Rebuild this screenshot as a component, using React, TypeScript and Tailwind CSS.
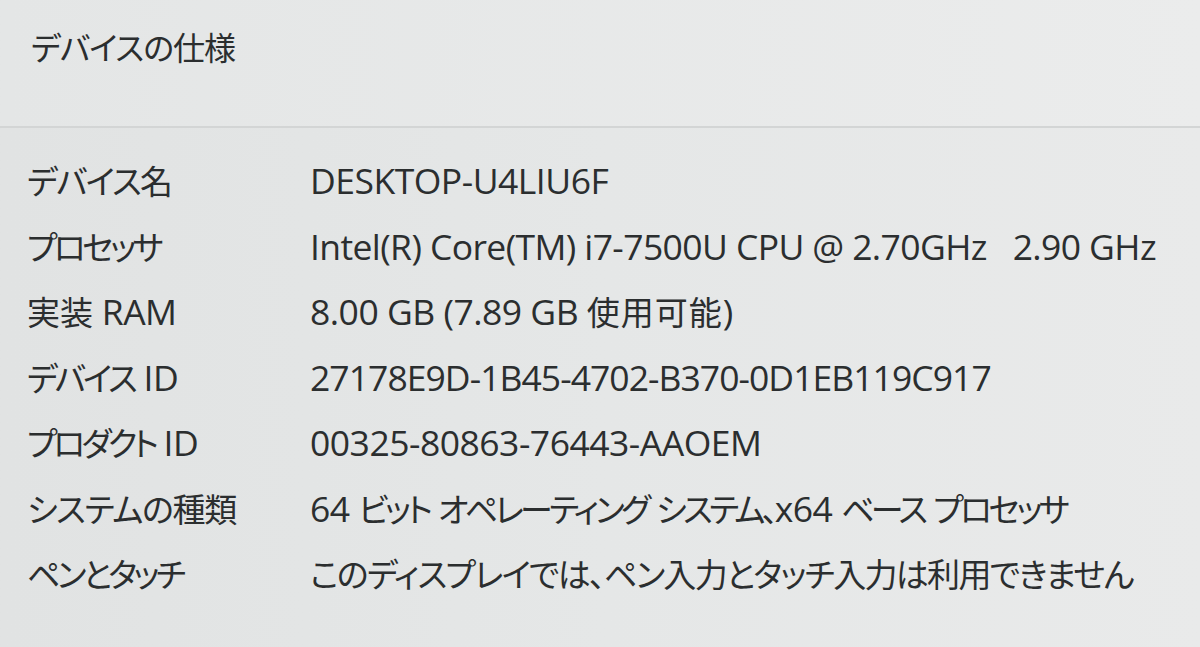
import React from "react";

type Row = { k: string; v: string; kc: string; vc: string; vl?: string };

const rows: Row[] = [
  { k: "デバイス名", v: "DESKTOP-U4LIU6F", kc: "tracking-[-1.7px]", vc: "tracking-[-1.3px]" },
  {
    k: "プロセッサ",
    v: "Intel(R) Core(TM) i7-7500U CPU @ 2.70GHz\u00a0\u00a0 2.90 GHz",
    kc: "tracking-[-3.6px]",
    vc: "tracking-[-1.3px]",
    vl: "tracking-[-0.6px]",
  },
  { k: "実装 RAM", v: "8.00 GB (7.89 GB 使用可能)", kc: "tracking-[0px]", vc: "tracking-[1px]" },
  {
    k: "デバイス ID",
    v: "27178E9D-1B45-4702-B370-0D1EB119C917",
    kc: "tracking-[-3px]",
    vc: "tracking-[-1.3px]",
    vl: "tracking-[-0.95px]",
  },
  { k: "プロダクト ID", v: "00325-80863-76443-AAOEM", kc: "tracking-[-4px]", vc: "tracking-[-1.3px]" },
  {
    k: "システムの種類",
    v: "64 ビット オペレーティング システム、x64 ベース プロセッサ",
    kc: "tracking-[-1.3px]",
    vc: "tracking-[-3.6px]",
  },
  {
    k: "ペンとタッチ",
    v: "このディスプレイでは、ペン入力とタッチ入力は利用できません",
    kc: "tracking-[-3.6px]",
    vc: "tracking-[-1.7px]",
  },
];

function Mixed({ text, cjk, latin }: { text: string; cjk: string; latin?: string }) {
  const parts = text.match(/[\u0000-\u00ff]+|[^\u0000-\u00ff]+/g) || [];
  return (
    <>
      {parts.map((p, i) =>
        /[^\u0000-\u00ff]/.test(p) ? (
          <span key={i} className={"text-[33px] " + cjk}>
            {p}
          </span>
        ) : (
          <span key={i} className={latin || "tracking-[-0.5px]"}>
            {p}
          </span>
        )
      )}
    </>
  );
}

export default function App() {
  return (
    <div
      className="w-[1200px] h-[647px] overflow-hidden bg-gradient-to-r from-[#e1e3e3] via-[#e5e7e7] to-[#e9eaea] text-[#2b2e2f]"
      style={{ fontFamily: '"Open Sans", "Noto Sans CJK JP", sans-serif', fontFeatureSettings: '"palt"' }}
    >
      <div className="h-[128px] pl-[31px] pt-[24px] bg-gradient-to-r from-[#e4e6e6] to-[#ebecec] border-b-2 border-[#d3d5d5]">
        <div className="text-[32px] leading-[48px] tracking-[-1px]">デバイスの仕様</div>
      </div>
      <div className="pt-[20px] pl-[27px] flex flex-col">
        {rows.map((r) => (
          <div key={r.k} className="flex h-[65.5px] items-center text-[35.5px] whitespace-pre">
            <div className="w-[283px] shrink-0">
              <Mixed text={r.k} cjk={r.kc} />
            </div>
            <div>
              <Mixed text={r.v} cjk={r.vc} latin={r.vl} />
            </div>
          </div>
        ))}
      </div>
    </div>
  );
}
